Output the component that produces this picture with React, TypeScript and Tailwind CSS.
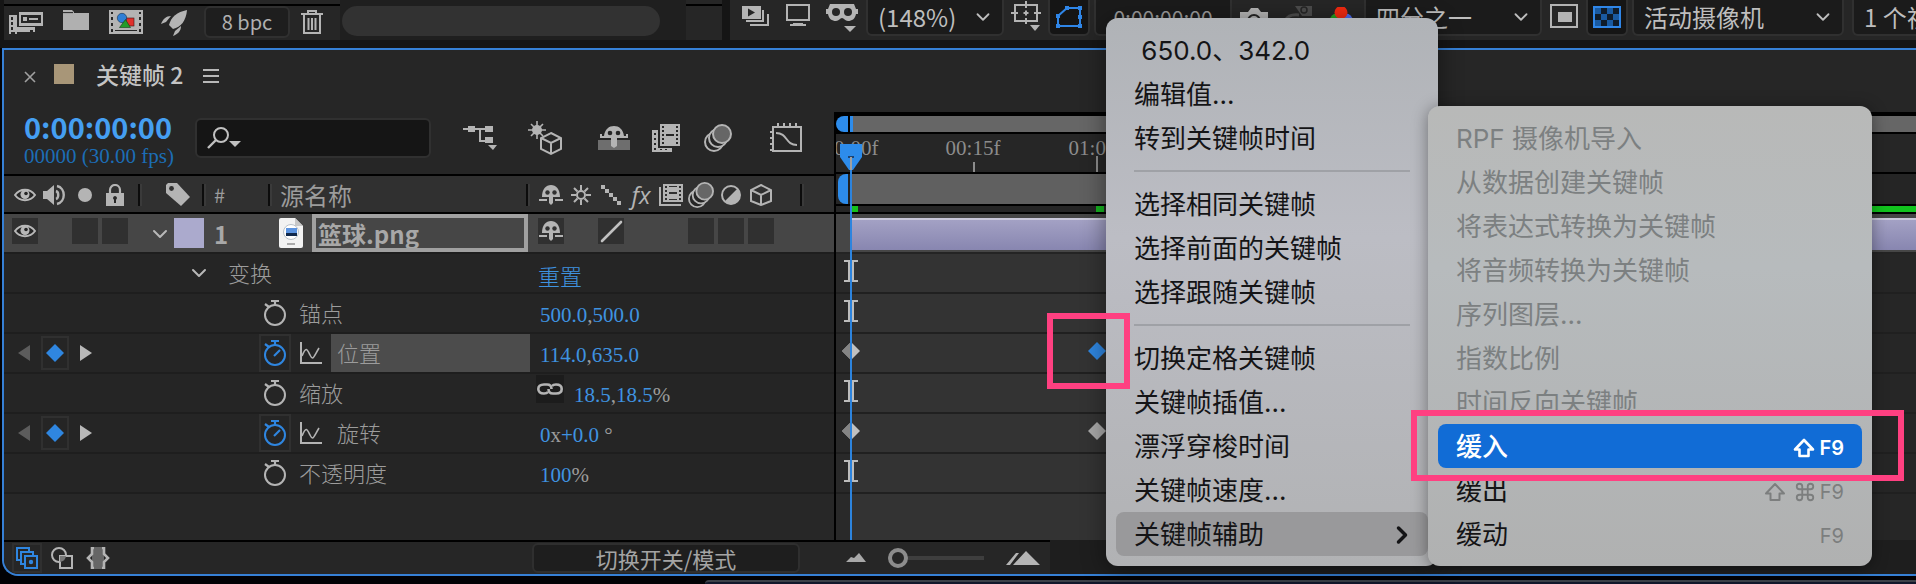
import React from "react";
import { ChevronDown, ChevronRight, Command } from "lucide-react";

type P = { children?: React.ReactNode };

const sans = "font-['Noto_Sans_CJK_SC',sans-serif]";
const serif = "font-['Liberation_Serif','Noto_Sans_CJK_SC',serif]";
const menuFont = "font-['Inter','Noto_Sans_CJK_SC',sans-serif]";

/* ---------- icons ---------- */

const Svg = ({ w, h, children }: P & { w: number; h: number }) => (
  <svg width={w} height={h} viewBox={`0 0 ${w} ${h}`} fill="none" stroke="none" aria-hidden="true" className="block shrink-0">
    {children}
  </svg>
);

const ProjectIcon = () => (
  <Svg w={34} h={24}>
    <path d="M0 5h8v12h18v5h-2v-2h-3v2H8v2H6v-2H2v2H0z" fill="#b4b4b4" />
    <path d="M2 7h2v3H2zM2 12h2v3H2zM2 17h2v3H2z" fill="#262626" />
    <rect x="10" y="2" width="24" height="14" fill="#b4b4b4" />
    <rect x="12" y="5" width="20" height="8" fill="#262626" />
    <rect x="14" y="7" width="4" height="4" fill="#b4b4b4" />
    <rect x="20" y="8" width="9" height="2" fill="#b4b4b4" />
  </Svg>
);

const FolderIcon = () => (
  <Svg w={26} h={20}>
    <path d="M0 0h9l2 2v1h15v17H0z" fill="#b0b0b0" />
    <path d="M0 2.600h10" stroke="#262626" strokeWidth="1" />
  </Svg>
);

const CompIcon = () => (
  <Svg w={34} h={24}>
    <rect width="34" height="24" fill="#b4b4b4" />
    <path d="M2 2h2v2H2zM2 7h2v3H2zM2 13h2v3H2zM2 19h2v3H2zM30 2h2v2h-2zM30 7h2v3h-2zM30 13h2v3h-2zM30 19h2v3h-2zM6 20h22v1H6z" fill="#262626" />
    <rect x="17" y="8" width="8" height="8" fill="#e0302c" stroke="#3a1a1a" strokeWidth=".6" />
    <circle cx="13" cy="8" r="4.700" fill="#2f7fd6" stroke="#16304c" strokeWidth=".6" />
    <path d="M16.500 9.500l5 8h-11z" fill="#239b2b" stroke="#123e15" strokeWidth=".6" />
  </Svg>
);

const RocketIcon = () => (
  <Svg w={26} h={26}>
    <path d="M26 0C16 2 10 7 8 15l4 4C20 17 25 11 26 0z" fill="#b4b4b4" />
    <path d="M10 6C5 6 2 9 0 14l5-2zM20 16c0 5-3 8-8 10l2-5z" fill="#b4b4b4" />
  </Svg>
);

const TrashIcon = () => (
  <Svg w={22} h={25}>
    <path d="M0 4h22M7 4V1h8v3M3 5v18h16V5M7.500 8v12M11 8v12M14.500 8v12" stroke="#b4b4b4" strokeWidth="2" />
  </Svg>
);

const StackPlayIcon = () => (
  <Svg w={28} h={22}>
    <rect width="19" height="13" y="1" fill="#b4b4b4" />
    <path d="M6 3.500l7 4-7 4z" fill="#262626" />
    <path d="M21 5v11H4M26 9v11H8" stroke="#b4b4b4" strokeWidth="2" />
  </Svg>
);

const MonitorIcon = () => (
  <Svg w={28} h={24}>
    <rect x="3" y="1" width="22" height="15" stroke="#b4b4b4" strokeWidth="2" />
    <path d="M9 19h10v1h3v2H6v-2h3z" fill="#b4b4b4" />
  </Svg>
);

const GogglesIcon = () => (
  <Svg w={32} h={28}>
    <path d="M4 0h24l2 5h2v5h-2c-1 5-4 7-8 7-3 0-4-3-6-3s-3 3-6 3c-4 0-7-2-8-7H0V5h2z" fill="#b4b4b4" />
    <circle cx="10" cy="8" r="4" fill="#262626" />
    <circle cx="22" cy="8" r="4" fill="#262626" />
    <path d="M18 22h12l-6 6z" fill="#b4b4b4" />
  </Svg>
);

const GridTargetIcon = () => (
  <Svg w={30} h={30}>
    <path d="M4 4h22v16H4zM15 0v7M15 17v6M0 12h7M23 12h7M15 9.500v5M12.500 12h5" stroke="#b4b4b4" strokeWidth="2" />
    <path d="M19 24h10l-5 6z" fill="#b4b4b4" />
  </Svg>
);

const MaskIcon = () => (
  <Svg w={28} h={24}>
    <path d="M3 21V11L12 3h13v18z" stroke="#2f86e8" strokeWidth="2" />
    <path d="M1 19h4v4H1zM1 9h4v4H1zM10 1h4v4h-4zM23 1h4v4h-4zM23 10h4v4h-4zM23 19h4v4h-4z" fill="#2f86e8" />
  </Svg>
);

const CameraIcon = () => (
  <Svg w={28} h={24}>
    <path d="M0 4h8l3-4h7l3 4h7v20H0z" fill="#b4b4b4" />
    <circle cx="14" cy="13" r="6" stroke="#262626" strokeWidth="2" />
  </Svg>
);

const SnapshotIcon = () => (
  <Svg w={28} h={28}>
    <path d="M11 0h4l2-3h5l2 3h4v10H18" fill="#4c4c4c" />
    <circle cx="20" cy="4" r="3" stroke="#262626" strokeWidth="1.500" />
    <path d="M0 18c2-8 7-10 15-9" stroke="#4c4c4c" strokeWidth="3" />
  </Svg>
);

const RgbIcon = () => (
  <Svg w={28} h={26}>
    <circle cx="8.500" cy="13" r="6.500" fill="#22a022" />
    <circle cx="18" cy="13" r="6.500" fill="#4a6cf0" />
    <circle cx="13" cy="5.500" r="6.500" fill="#f22a10" />
  </Svg>
);

const RegionIcon = () => (
  <Svg w={28} h={24}>
    <rect x="1" y="1" width="26" height="22" stroke="#b4b4b4" strokeWidth="2" />
    <rect x="8" y="8" width="14" height="10" fill="#b4b4b4" />
  </Svg>
);

const CheckerIcon = () => (
  <Svg w={28} h={24}>
    <rect x="1" y="2" width="26" height="20" fill="#0f1c2a" stroke="#2f86e8" strokeWidth="2" />
    <path d="M2 3h6v6H2zM14 3h6v6h-6zM8 9h6v6H8zM20 9h6v6h-6zM2 15h6v6H2zM14 15h6v6h-6z" fill="#1a5aa0" />
  </Svg>
);

const SearchIcon = () => (
  <Svg w={34} h={24}>
    <circle cx="14" cy="9" r="7" stroke="#c0c0c0" strokeWidth="2" />
    <path d="M9 14l-8 8" stroke="#c0c0c0" strokeWidth="2.400" />
    <path d="M22 15h12l-6 6z" fill="#c0c0c0" />
  </Svg>
);

const FlowIcon = () => (
  <Svg w={34} h={26}>
    <path d="M0 4h24M17 4v12h8" stroke="#b4b4b4" strokeWidth="2" />
    <path d="M5 1h7v6H5zM22 1h8v6h-8zM22 12h8v6h-8zM25 20h9l-4 5z" fill="#b4b4b4" />
  </Svg>
);

const Draft3dIcon = () => (
  <Svg w={36} h={36}>
    <path d="M9 1v18M0 10h18M3 4l12 12M15 4L3 16" stroke="#b4b4b4" strokeWidth="1.600" />
    <circle cx="9" cy="10" r="5" fill="#b4b4b4" />
    <path d="M23 13l10 5v11l-10 5-10-5V18z" fill="#262626" stroke="#b4b4b4" strokeWidth="2" />
    <path d="M13 18l10 5 10-5M23 23v11" stroke="#b4b4b4" strokeWidth="2" />
  </Svg>
);

const HideShyIcon = () => (
  <Svg w={32} h={26}>
    <path d="M0 15h32v10H0z" fill="#6e6e6e" />
    <path d="M2 9h2v2h2C7 4 11 1 16 1s9 3 10 10h2V9h2v4H19v8l-3 2-3-2v-8H2z" fill="#b4b4b4" />
    <circle cx="12" cy="8" r="2.300" fill="#262626" />
    <circle cx="20" cy="8" r="2.300" fill="#262626" />
  </Svg>
);

const FrameBlendIcon = () => (
  <Svg w={28} h={28}>
    <path d="M0 6h6v18h14v4H0z" fill="#b4b4b4" />
    <path d="M2 9h2v2H2zM2 14h2v2H2zM2 19h2v2H2zM2 24h2v2H2zM8 25h2v1H8zM13 25h2v1h-2z" fill="#262626" />
    <path d="M8 0h20v22H8z" fill="#b4b4b4" />
    <path d="M10 2h2v2h-2zM10 6h2v2h-2zM10 10h2v2h-2zM10 14h2v2h-2zM10 18h2v2h-2zM24 2h2v2h-2zM24 6h2v2h-2zM24 10h2v2h-2zM24 14h2v2h-2zM24 18h2v2h-2zM14 10h8v2h-8z" fill="#262626" />
  </Svg>
);

const MotionBlurIcon = ({ w = 28 }: { w?: number }) => (
  <svg width={w} height={w} viewBox="0 0 28 28" fill="none" aria-hidden="true" className="block shrink-0">
    <circle cx="10" cy="18" r="9" fill="#262626" stroke="#b4b4b4" strokeWidth="2" />
    <circle cx="14" cy="14" r="9" fill="#262626" stroke="#b4b4b4" strokeWidth="2" />
    <circle cx="18" cy="10" r="9" fill="#666" stroke="#b4b4b4" strokeWidth="2" />
  </svg>
);

const GraphEditorIcon = () => (
  <Svg w={32} h={32}>
    <path d="M3 5h28v24H3zM0 10h3M0 16h3M0 22h3M0 28h3M8 1v4M14 1v4M20 1v4M26 1v4" stroke="#b4b4b4" strokeWidth="2" />
    <path d="M6 11c12 0 9 12 21 12" stroke="#b4b4b4" strokeWidth="2" />
  </Svg>
);

const EyeIcon = () => (
  <Svg w={22} h={14}>
    <path d="M1 7c5-7 15-7 20 0-5 7-15 7-20 0z" fill="#262626" stroke="#b8b8b8" strokeWidth="2" />
    <circle cx="11" cy="6.500" r="4.500" fill="#b8b8b8" />
    <circle cx="12" cy="5.500" r="1.800" fill="#262626" />
  </Svg>
);

const SpeakerIcon = () => (
  <Svg w={24} h={22}>
    <path d="M0 7h4l7-6v20l-7-6H0z" fill="#b4b4b4" />
    <path d="M13 7c3 1 3 7 0 8M14 2c9 2 9 16 0 18" stroke="#b4b4b4" strokeWidth="2.400" />
  </Svg>
);

const DotIcon = () => (
  <Svg w={14} h={14}>
    <circle cx="7" cy="7" r="7" fill="#b4b4b4" />
  </Svg>
);

const LockIcon = () => (
  <Svg w={20} h={22}>
    <path d="M5 10V6a5 5 0 0110 0v4" stroke="#b4b4b4" strokeWidth="2.200" />
    <path d="M1 9h18v13H1z" fill="#b4b4b4" />
    <path d="M10 12a2 2 0 011 3.700V19H9v-3.300A2 2 0 0110 12z" fill="#262626" />
  </Svg>
);

const TagIcon = () => (
  <Svg w={24} h={24}>
    <path d="M0 2l2-2h9l13 14-9 9L0 10z" fill="#b4b4b4" />
    <circle cx="5.500" cy="5.500" r="2.400" fill="#303030" />
  </Svg>
);

const ShyIcon = () => (
  <Svg w={24} h={20}>
    <path d="M3 12C3 4 7 0 12 0s9 4 9 12h-7v6l-2 2-2-2v-6z" fill="#b4b4b4" />
    <circle cx="8.500" cy="7.500" r="2.200" fill="#303030" />
    <circle cx="15.500" cy="7.500" r="2.200" fill="#303030" />
    <path d="M0 15h8M16 15h8" stroke="#b4b4b4" strokeWidth="2" />
  </Svg>
);

const SunIcon = () => (
  <Svg w={20} h={20}>
    <circle cx="10" cy="10" r="4" stroke="#b4b4b4" strokeWidth="2" />
    <path d="M10 0v5M10 15v5M0 10h5M15 10h5M3 3l3.500 3.500M13.500 13.500L17 17M17 3l-3.500 3.500M6.500 13.500L3 17" stroke="#b4b4b4" strokeWidth="2" />
  </Svg>
);

const StepsIcon = () => (
  <Svg w={20} h={20}>
    <path d="M0 0h4v4H0zM4 4h4v4H4zM8 8h4v4H8zM12 12h4v4h-4zM16 16h4v4h-4z" fill="#b4b4b4" />
  </Svg>
);

const FrameSwitchIcon = () => (
  <Svg w={24} h={22}>
    <path d="M1 3v18h21" stroke="#b4b4b4" strokeWidth="2" />
    <path d="M4 0h20v18H4z" fill="#b4b4b4" />
    <path d="M6 2h2v2H6zM6 6h2v2H6zM6 10h2v2H6zM6 14h2v2H6zM20 2h2v2h-2zM20 6h2v2h-2zM20 10h2v2h-2zM20 14h2v2h-2zM10 8h8v2h-8zM10 2h8v1h-8zM10 15h8v1h-8z" fill="#303030" />
  </Svg>
);

const AdjustIcon = () => (
  <Svg w={20} h={20}>
    <circle cx="10" cy="10" r="9" stroke="#b4b4b4" strokeWidth="2" />
    <path d="M16.500 3.500A9 9 0 013.500 16.500z" fill="#b4b4b4" />
  </Svg>
);

const CubeIcon = () => (
  <Svg w={22} h={22}>
    <path d="M11 1l10 5v11l-10 4-10-4V6zM1 6l10 5 10-5M11 11v10" stroke="#b4b4b4" strokeWidth="2" />
  </Svg>
);

const FileIcon = () => (
  <Svg w={24} h={30}>
    <path d="M2 0h14l8 8v20a2 2 0 01-2 2H2a2 2 0 01-2-2V2a2 2 0 012-2z" fill="#f2f2f2" />
    <path d="M16 0l8 8h-8z" fill="#c8c8c8" />
    <circle cx="12" cy="14" r="7.500" fill="#fff" stroke="#b8c0c8" strokeWidth="1" />
    <path d="M7 10h11v5H7z" fill="#5b93e0" />
    <path d="M7 15h11v3H7z" fill="#10284c" />
    <path d="M8 26h8" stroke="#aaa" strokeWidth="2" />
  </Svg>
);

const StopwatchIcon = ({ on }: { on?: boolean }) => {
  const c = on ? "#2f86e0" : "#b4b4b4";
  return (
    <Svg w={24} h={28}>
      <circle cx="12" cy="16" r="10" stroke={c} strokeWidth="2" />
      <path d="M8 2h8M12 2v4M2 5l4 3" stroke={c} strokeWidth="2.200" />
      {on && <path d="M11 17l6-6" stroke={c} strokeWidth="2.200" />}
    </Svg>
  );
};

const GraphIcon = () => (
  <Svg w={22} h={22}>
    <path d="M1 0v21h21" stroke="#b4b4b4" strokeWidth="2" />
    <path d="M2 14c4-10 5-7 8-1s3 3 9-7" stroke="#b4b4b4" strokeWidth="1.600" />
  </Svg>
);

const LinkIcon = () => (
  <Svg w={26} h={12}>
    <path d="M11 9c-1 1.300-2 1.500-4 1.500C3 10.500 1.300 8.500 1.300 6S3 1.500 7 1.500h3c3 0 4.500 2 4.500 4.500" stroke="#b4b4b4" strokeWidth="2.600" />
    <path d="M15 3c1-1.300 2-1.500 4-1.500 4 0 5.700 2 5.700 4.500s-1.700 4.500-5.700 4.500h-3c-3 0-4.500-2-4.500-4.500" stroke="#b4b4b4" strokeWidth="2.600" />
  </Svg>
);

const Diamond = ({ kind }: { kind: "half" | "grey" | "blue" }) => (
  <Svg w={18} h={18}>
    <path d="M9 0l9 9-9 9-9-9z" fill={kind === "blue" ? "#2f86e0" : kind === "grey" ? "#a8a8a8" : "#c0c0c0"} />
    {kind === "half" && <path d="M9 0v18L0 9z" fill="#858585" />}
  </Svg>
);

const IBeam = () => (
  <Svg w={14} h={22}>
    <path d="M0 1h14M0 21h14" stroke="#bcbcbc" strokeWidth="2" />
    <path d="M7 1v20" stroke="#bcbcbc" strokeWidth="6" />
  </Svg>
);

const LayersIcon = () => (
  <Svg w={22} h={22}>
    <path d="M5 13H1V1h12v4M9 17H5V5h12v4" stroke="#2f86e0" strokeWidth="2" />
    <rect x="9" y="9" width="12" height="12" stroke="#2f86e0" strokeWidth="2" />
    <circle cx="15" cy="15" r="2.200" fill="#2f86e0" />
  </Svg>
);

const ModesIcon = () => (
  <Svg w={22} h={22}>
    <circle cx="8" cy="8" r="7" stroke="#b4b4b4" strokeWidth="2" />
    <rect x="9" y="9" width="12" height="12" fill="#262626" stroke="#b4b4b4" strokeWidth="2" />
    <path d="M9 9h6a7 7 0 01-6 6z" fill="#777" />
  </Svg>
);

const BracesIcon = () => (
  <Svg w={24} h={22}>
    <rect x="6" width="12" height="22" fill="#666" />
    <path d="M8 1H6v6l-4 4 4 4v6h2M16 1h2v6l4 4-4 4v6h-2" stroke="#b4b4b4" strokeWidth="2.600" />
  </Svg>
);

const ShiftKeyIcon = ({ bold }: { bold?: boolean }) => (
  <Svg w={22} h={20}>
    <path d="M11 2L2 11.500h4.500V18h9v-6.500H20z" stroke="currentColor" strokeWidth={bold ? 2.600 : 2} strokeLinejoin="round" />
  </Svg>
);

/* ---------- shared parts ---------- */

const IconButton = ({ label, className = "", children }: P & { label: string; className?: string }) => (
  <button type="button" aria-label={label} className={`flex shrink-0 items-center justify-center ${className}`}>
    {children}
  </button>
);

const TopSelect = ({ label, value, className }: { label: string; value: string; className: string }) => (
  <label className={`relative flex h-9 shrink-0 rounded-b-md border-2 border-t-0 border-[#303030] bg-[#1b1b1b] ${className}`}>
    <select aria-label={label} className="w-full appearance-none truncate bg-transparent pl-2.5 text-2xl leading-8 text-[#bebebe] outline-none">
      <option>{value}</option>
    </select>
    <ChevronDown size={22} strokeWidth={2} className="pointer-events-none absolute top-1.5 right-2 text-[#bebebe]" />
  </label>
);

const TopBar = () => (
  <div className="flex h-12 overflow-hidden bg-[#151515] pb-2 pl-1">
    <div className="flex w-[718px] shrink-0 bg-[#262626]">
      <div className="w-[336px] border-t-4 border-[#262626]">
        <div className="flex w-full items-start gap-4 border-t-2 border-black pt-1 pl-1">
          <IconButton label="解释素材" className="w-9"><ProjectIcon /></IconButton>
          <IconButton label="新建文件夹" className="w-8"><FolderIcon /></IconButton>
          <IconButton label="新建合成" className="w-9"><CompIcon /></IconButton>
          <IconButton label="项目设置" className="w-7"><RocketIcon /></IconButton>
          <button type="button" className="-mt-1 h-8 w-[86px] shrink-0 rounded-md border-2 border-[#303030] bg-[#1e1e1e] text-xl leading-7 text-[#b0b0b0]">
            8 bpc
          </button>
          <IconButton label="删除" className="-ml-1.5 w-6"><TrashIcon /></IconButton>
        </div>
      </div>
      <div className="flex w-[346px] items-center bg-[#1f1f1f] px-0.5">
        <div className="mt-0.5 h-[30px] w-[318px] rounded-full bg-[#323232]" />
      </div>
      <div className="flex-1 border-t-4 border-[#262626]">
        <div className="h-0.5 bg-black" />
      </div>
    </div>
    <div className="ml-2 flex min-w-0 flex-1 items-start gap-2 overflow-hidden bg-[#262626] pl-3">
      <div className="flex h-8 shrink-0 gap-3.5">
        <IconButton label="始终预览此视图"><StackPlayIcon /></IconButton>
        <IconButton label="主查看器"><MonitorIcon /></IconButton>
        <IconButton label="沉浸式视频" className="pt-1"><GogglesIcon /></IconButton>
      </div>
      <TopSelect label="放大率" value="(148%)" className="w-[138px]" />
      <IconButton label="网格和参考线" className="h-8 w-7"><GridTargetIcon /></IconButton>
      <div className="flex shrink-0 gap-1">
        <IconButton label="切换蒙版" className="h-9 w-[42px] rounded-b-md border-2 border-t-0 border-[#303030] bg-[#151515]"><MaskIcon /></IconButton>
        <button type="button" className="h-9 w-[138px] rounded-b-md border-2 border-t-0 border-[#303030] bg-[#1b1b1b] text-[21px] leading-8 text-[#9c9c9c]">
          0:00:00:00
        </button>
      </div>
      <div className="flex shrink-0 gap-4 pt-1.5">
        <IconButton label="拍摄快照"><CameraIcon /></IconButton>
        <IconButton label="显示快照"><SnapshotIcon /></IconButton>
        <IconButton label="显示通道"><RgbIcon /></IconButton>
      </div>
      <TopSelect label="分辨率" value="四分之一" className="w-[178px]" />
      <IconButton label="目标区域" className="h-8 w-7"><RegionIcon /></IconButton>
      <div className="flex shrink-0 gap-1">
        <IconButton label="切换透明网格" className="h-9 w-[42px] rounded-b-md border-2 border-t-0 border-[#303030] bg-[#151515]"><CheckerIcon /></IconButton>
        <TopSelect label="3D 视图" value="活动摄像机" className="w-[212px]" />
      </div>
      <TopSelect label="视图布局" value="1 个视图" className="w-[150px]" />
    </div>
  </div>
);

const Sep = () => <span className="h-[22px] w-1 shrink-0 border-l-2 border-[#0c0c0c] bg-[#3a3a3a]" />;
const Cell = ({ children }: P) => <span className="flex w-[30px] shrink-0 items-center justify-center">{children}</span>;
const Box = ({ children }: P) => (
  <span className="flex h-[26px] w-[26px] items-center justify-center bg-[#303030]">{children}</span>
);

const ColumnHeader = () => (
  <div className="flex h-10 items-center border-y-2 border-black bg-[#303030] pt-0.5 text-[#9c9c9c]">
    <div className="flex w-[134px] pl-1.5">
      <Cell><EyeIcon /></Cell>
      <Cell><SpeakerIcon /></Cell>
      <Cell><DotIcon /></Cell>
      <Cell><LockIcon /></Cell>
    </div>
    <Sep />
    <div className="flex w-[60px] justify-center pl-3"><TagIcon /></div>
    <Sep />
    <div className="w-[62px] pl-2 text-xl">#</div>
    <Sep />
    <div className="w-[254px] pl-2 text-2xl">源名称</div>
    <Sep />
    <div className="flex h-6 w-[270px] pl-1.5">
      <Cell><ShyIcon /></Cell>
      <Cell><SunIcon /></Cell>
      <Cell><StepsIcon /></Cell>
      <Cell><span className="font-['Open_Sans',sans-serif] text-2xl leading-6 text-[#b4b4b4] italic">fx</span></Cell>
      <Cell><FrameSwitchIcon /></Cell>
      <Cell><MotionBlurIcon w={26} /></Cell>
      <Cell><AdjustIcon /></Cell>
      <Cell><CubeIcon /></Cell>
    </div>
    <Sep />
  </div>
);

const LayerRow = () => (
  <div className="flex h-10 items-start border-b-2 border-[#1e1e1e] bg-[#464646]">
    <div className="flex w-[144px] shrink-0 pt-1 pl-1.5">
      <Cell><Box><EyeIcon /></Box></Cell>
      <Cell />
      <Cell><Box /></Cell>
      <Cell><Box /></Cell>
    </div>
    <ChevronDown size={24} className="mt-2 w-6 shrink-0 text-[#b8b8b8]" />
    <span className="mt-1 ml-0.5 h-[30px] w-[30px] shrink-0 bg-[#abaacd]" />
    <span className="w-[75px] shrink-0 pt-0.5 pl-2.5 text-2xl leading-9 font-bold text-[#a8a8a8]">1</span>
    <span className="w-[33px] shrink-0 pt-1"><FileIcon /></span>
    <input
      aria-label="图层名称"
      defaultValue="篮球.png"
      className="h-[38px] w-[216px] min-w-0 border-4 border-[#a0a0a0] bg-[#464646] pl-0.5 text-2xl leading-7 font-bold text-[#a8a8a8] outline-none"
    />
    <div className="flex pt-1 pl-2">
      <Cell><Box><ShyIcon /></Box></Cell>
      <Cell />
      <Cell>
        <Box>
          <Svg w={24} h={24}><path d="M3 22L22 3" stroke="#c0c0c0" strokeWidth="2.600" strokeLinecap="round" /></Svg>
        </Box>
      </Cell>
      <Cell />
      <Cell />
      <Cell><Box /></Cell>
      <Cell><Box /></Cell>
      <Cell><Box /></Cell>
    </div>
  </div>
);

const KeyNav = () => (
  <div className="flex items-center gap-2.5">
    <IconButton label="上一个关键帧" className="w-3.5"><Svg w={12} h={16}><path d="M12 0v16L0 8z" fill="#5c5c5c" /></Svg></IconButton>
    <IconButton label="关键帧" className="h-[34px] w-7 border-2 border-[#303030]"><Diamond kind="blue" /></IconButton>
    <IconButton label="下一个关键帧" className="w-3.5"><Svg w={12} h={16}><path d="M0 0l12 8-12 8z" fill="#b8b8b8" /></Svg></IconButton>
  </div>
);

const Val = ({ children }: P) => <button type="button" className="text-[#3f93e0]">{children}</button>;

const PropRow = ({ name, keyed, selected, children }: P & { name: string; keyed?: boolean; selected?: boolean }) => (
  <div className="flex h-10 items-center border-b-2 border-[#1e1e1e] bg-[#252525] text-[#9c9c9c]">
    <div className="flex w-[255px] shrink-0 pl-[13px]">{keyed && <KeyNav />}</div>
    <IconButton
      label={`${name} 时间变化秒表`}
      className={keyed ? "h-[38px] w-8 border-2 border-[#303030]" : "h-[38px] w-8"}
    >
      <StopwatchIcon on={keyed} />
    </IconButton>
    {keyed && <IconButton label={`${name} 图表`} className="w-9 pr-1 pl-2"><GraphIcon /></IconButton>}
    <div className={`flex h-[38px] items-center pb-0.5 text-[22px] font-light ${keyed ? "ml-1 w-[199px] pl-1.5" : "w-[239px] pl-2"} ${selected ? "bg-[#4c4c4c]" : ""}`}>
      {name}
    </div>
    <div className={`flex items-center pt-1 pl-2.5 text-[21px] leading-7 whitespace-pre ${serif}`}>{children}</div>
  </div>
);

const LeftPane = () => (
  <div className="flex w-[832px] shrink-0 flex-col border-r-2 border-black">
    <div className="flex h-[62px] items-start">
      <div className="w-[187px] pl-5 whitespace-nowrap">
        <div className="text-[29px] leading-7 font-bold text-[#459ff2]">0:00:00:00</div>
        <div className={`pt-1 text-[21px] leading-6 text-[#1c6db5] ${serif}`}>00000 (30.00 fps)</div>
      </div>
      <label className="mt-1.5 ml-1 flex h-10 w-[236px] items-center rounded-md border-2 border-[#303030] bg-[#151515] pl-2.5">
        <SearchIcon />
        <input aria-label="搜索" className="min-w-0 flex-1 bg-transparent text-xl text-[#c0c0c0] outline-none" />
      </label>
      <div className="flex h-[52px] flex-1 items-center pl-[31px]">
        <IconButton label="合成微型流程图" className="w-9"><FlowIcon /></IconButton>
        <IconButton label="草图 3D" className="ml-[30px] w-9"><Draft3dIcon /></IconButton>
        <IconButton label="隐藏消隐图层" className="ml-8 w-9"><HideShyIcon /></IconButton>
        <IconButton label="帧混合" className="ml-5 w-7"><FrameBlendIcon /></IconButton>
        <IconButton label="运动模糊" className="ml-6 w-7"><MotionBlurIcon /></IconButton>
        <IconButton label="图表编辑器" className="ml-9 w-9"><GraphEditorIcon /></IconButton>
      </div>
    </div>
    <ColumnHeader />
    <LayerRow />
    <div className="flex h-10 items-center border-b-2 border-[#1e1e1e] bg-[#252525] text-[22px] font-light text-[#9c9c9c]">
      <ChevronDown size={24} className="ml-[183px] text-[#b8b8b8]" />
      <span className="w-[309px] pb-0.5 pl-[17px]">变换</span>
      <button type="button" className="pt-1 pl-[18px] font-light text-[#3f93e0]">重置</button>
    </div>
    <PropRow name="锚点"><Val>500.0</Val>,<Val>500.0</Val></PropRow>
    <PropRow name="位置" keyed selected><Val>114.0</Val>,<Val>635.0</Val></PropRow>
    <PropRow name="缩放">
      <span className="-mt-3 -ml-1 mr-2.5 flex h-7 w-7 items-center justify-center bg-[#1c1c1c]"><LinkIcon /></span>
      <Val>18.5</Val>,<Val>18.5</Val>%
    </PropRow>
    <PropRow name="旋转" keyed><Val>0</Val>x<Val>+0.0</Val> °</PropRow>
    <PropRow name="不透明度"><Val>100</Val>%</PropRow>
    <div className="h-[46px] flex-1 bg-[#272727]" />
  </div>
);

const TrackRow = ({ children }: P) => (
  <div className="relative flex h-10 border-b-2 border-[#202020]">
    <div className="w-3.5 bg-[#292929]" />
    <div className="flex-1 bg-[#333333]" />
    <div className="w-20 bg-[#262626]" />
    {children}
  </div>
);

const Mark = ({ children, at = "left-[15px]" }: P & { at?: string }) => (
  <span className={`absolute top-[17px] -translate-x-1/2 -translate-y-1/2 ${at}`}>{children}</span>
);

const Timeline = () => (
  <div className="relative flex min-w-0 flex-1 flex-col overflow-hidden">
    <div className="flex h-[22px] border-t-4 border-b-2 border-black bg-black">
      <span className="w-3 rounded-l-xl bg-[#2d8ceb]" />
      <span className="ml-0.5 w-[3px] bg-[#2d8ceb]" />
      <span className="flex-1 bg-[#666666]" />
    </div>
    <div className={`relative h-[38px] bg-[#262626] text-[21px] leading-6 text-[#8c8c8c] ${serif}`}>
      <span className="absolute top-0.5 left-[15px] -translate-x-1/2">00:00f</span>
      <span className="absolute top-0.5 left-[137px] -translate-x-1/2">00:15f</span>
      <span className="absolute top-0.5 left-[260px] -translate-x-1/2">01:00f</span>
      <span className="absolute bottom-0 left-[137px] h-2.5 w-0.5 bg-[#8c8c8c]" />
      <span className="absolute bottom-0 left-[260px] h-4 w-0.5 bg-[#8c8c8c]" />
    </div>
    <div className="flex h-[34px] border-y-2 border-black bg-[#252525]">
      <span className="ml-0.5 w-2.5 rounded-l-lg bg-[#2d8ceb]" />
      <span className="w-0.5 bg-[#222222]" />
      <div className="mr-20 flex-1 bg-[#606060]" />
    </div>
    <div className="flex h-2 border-b-2 border-black bg-[#262626]">
      <span className="ml-4 w-1.5 bg-[#16c21c]" />
      <span className="ml-[238px] w-2 bg-[#16b420]" />
      <span className="ml-auto w-20 bg-[#12c41e]" />
    </div>
    <div className="h-10 border-b-2 border-[#242424] bg-[#464646] pt-1 pb-0.5 pl-4">
      <div className="h-8 border-t-2 border-[#c9c8da] bg-linear-to-b from-[#a3a1c4] to-[#8886b0]" />
    </div>
    <TrackRow><Mark><IBeam /></Mark></TrackRow>
    <TrackRow><Mark><IBeam /></Mark></TrackRow>
    <TrackRow><Mark><Diamond kind="half" /></Mark><Mark at="left-[261px]"><Diamond kind="blue" /></Mark></TrackRow>
    <TrackRow><Mark><IBeam /></Mark></TrackRow>
    <TrackRow><Mark><Diamond kind="half" /></Mark><Mark at="left-[261px]"><Diamond kind="grey" /></Mark></TrackRow>
    <TrackRow><Mark><IBeam /></Mark></TrackRow>
    <div className="flex h-[46px]">
      <div className="w-3.5 bg-[#292929]" />
      <div className="flex-1 bg-[#333333]" />
      <div className="w-20 bg-[#262626]" />
    </div>
    <div className="absolute top-8 bottom-0 left-[15px] flex -translate-x-1/2 flex-col items-center">
      <Svg w={22} h={26}>
        <path d="M0 0h22v13L13 26H9L0 13z" fill="#2d8ceb" />
        <path d="M8 13h6" stroke="#1c4474" strokeWidth="2" />
        <path d="M11 13v13" stroke="#a0a0a0" strokeWidth="2" />
      </Svg>
      <span className="w-0.5 flex-1 bg-[#2d84de]" />
    </div>
  </div>
);

const Footer = () => (
  <div className="flex h-[34px] bg-[#1e1e1e]">
    <div className="flex w-[1046px] shrink-0 items-center border-t-2 border-black bg-[#262626]">
      <IconButton label="图层开关窗格" className="ml-2 h-[30px] w-[30px] border-2 border-[#303030]"><LayersIcon /></IconButton>
      <IconButton label="转换控制窗格" className="ml-1 w-8"><ModesIcon /></IconButton>
      <IconButton label="入点出点窗格" className="ml-1.5 w-7"><BracesIcon /></IconButton>
      <button type="button" className="ml-[420px] h-[30px] w-[268px] rounded-md border-2 border-[#2f2f2f] bg-[#1e1e1e] text-[22px] leading-6 text-[#a4a4a4]">
        切换开关/模式
      </button>
      <IconButton label="缩小" className="ml-[46px] w-5"><Svg w={20} h={10}><path d="M0 9l5-5 3 1 5-5 7 9z" fill="#a8a8a8" /></Svg></IconButton>
      <input
        type="range"
        aria-label="时间缩放"
        defaultValue={0}
        className="ml-[22px] h-5 w-24 appearance-none bg-transparent [&::-webkit-slider-runnable-track]:h-1 [&::-webkit-slider-runnable-track]:bg-[#3e3e3e] [&::-webkit-slider-thumb]:-mt-2 [&::-webkit-slider-thumb]:h-5 [&::-webkit-slider-thumb]:w-5 [&::-webkit-slider-thumb]:appearance-none [&::-webkit-slider-thumb]:rounded-full [&::-webkit-slider-thumb]:border-4 [&::-webkit-slider-thumb]:border-[#8c8c8c] [&::-webkit-slider-thumb]:bg-[#262626]"
      />
      <IconButton label="放大" className="ml-[21px] w-9"><Svg w={34} h={14}><path d="M0 14L10 2h3L4 14zM7 14L20 0l14 14z" fill="#b4b4b4" /></Svg></IconButton>
    </div>
  </div>
);

/* ---------- menus ---------- */

const MenuItem = ({ text, state = "normal", keys, arrow }: { text: string; state?: "normal" | "open" | "off" | "on"; keys?: React.ReactNode; arrow?: boolean }) => {
  const look = {
    normal: "text-[#141416]",
    open: "bg-[#99999b] text-[#141416]",
    off: "text-[#7c8081]",
    on: "bg-[#116cd6] font-medium text-white",
  }[state];
  return (
    <button type="button" role="menuitem" disabled={state === "off"} className={`flex h-11 w-full shrink-0 items-center rounded-lg px-[18px] pt-0.5 text-[26px] leading-none whitespace-pre ${look}`}>
      {text}
      {keys && <span className={`ml-auto flex items-center gap-1 pt-0.5 text-xl leading-none ${state === "on" ? "font-semibold" : "text-[#7c7e7e]"}`}>{keys}</span>}
      {arrow && <ChevronRight size={28} strokeWidth={3} className="-mr-1.5 ml-auto" />}
    </button>
  );
};

const Rule = () => (
  <div role="separator" className="flex h-[22px] items-center px-[18px]">
    <span className="h-0.5 w-full bg-[#9fa1a6]" />
  </div>
);

const ContextMenu = () => (
  <div role="menu" aria-label="关键帧" className={`absolute top-[18px] left-[1106px] w-[332px] rounded-xl bg-linear-to-b from-[#b0b3b7] via-[#bcbdc4] via-40% to-[#b1b2b4] px-2.5 py-2.5 shadow-[0_4px_24px_rgba(0,0,0,0.45)] ${menuFont}`}>
    <MenuItem text=" 650.0、342.0" />
    <MenuItem text="编辑值..." />
    <MenuItem text="转到关键帧时间" />
    <Rule />
    <MenuItem text="选择相同关键帧" />
    <MenuItem text="选择前面的关键帧" />
    <MenuItem text="选择跟随关键帧" />
    <Rule />
    <MenuItem text="切换定格关键帧" />
    <MenuItem text="关键帧插值..." />
    <MenuItem text="漂浮穿梭时间" />
    <MenuItem text="关键帧速度..." />
    <MenuItem text="关键帧辅助" state="open" arrow />
  </div>
);

const SubMenu = () => (
  <div role="menu" aria-label="关键帧辅助" className={`absolute top-[106px] left-[1428px] w-[444px] rounded-xl bg-linear-to-b from-[#b8b9b8] via-[#b7bbbd] via-35% to-[#b0b1b1] px-2.5 py-2.5 shadow-[0_2px_16px_rgba(0,0,0,0.4)] ${menuFont}`}>
    <MenuItem text="RPF 摄像机导入" state="off" />
    <MenuItem text="从数据创建关键帧" state="off" />
    <MenuItem text="将表达式转换为关键帧" state="off" />
    <MenuItem text="将音频转换为关键帧" state="off" />
    <MenuItem text="序列图层..." state="off" />
    <MenuItem text="指数比例" state="off" />
    <MenuItem text="时间反向关键帧" state="off" />
    <MenuItem text="缓入" state="on" keys={<><ShiftKeyIcon bold />F9</>} />
    <MenuItem text="缓出" keys={<><ShiftKeyIcon /><Command size={22} className="ml-1" />F9</>} />
    <MenuItem text="缓动" keys="F9" />
  </div>
);

export default function App() {
  return (
    <main className={`relative overflow-hidden bg-[#020205] ${sans}`}>
      <TopBar />
      <section className="ml-0.5 rounded-bl-2xl border-2 border-r-0 border-[#3680d6] bg-[#262626]">
        <div className="overflow-hidden rounded-bl-2xl">
          <header className="flex h-[62px] items-start pt-1.5 pl-5 text-[#c4c4c4]">
            <IconButton label="关闭" className="mt-[15px] h-3 w-3">
              <Svg w={12} h={12}><path d="M1 1l10 10M11 1L1 11" stroke="#a0a0a0" strokeWidth="1.600" /></Svg>
            </IconButton>
            <span className="mt-2 ml-[18px] h-5 w-5 bg-[#a89678]" />
            <h1 className="ml-[22px] text-[23px] leading-9 font-medium">关键帧 2</h1>
            <IconButton label="面板菜单" className="mt-3 ml-5">
              <Svg w={16} h={16}><path d="M0 2h16M0 8h16M0 14h16" stroke="#b8b8b8" strokeWidth="2" /></Svg>
            </IconButton>
          </header>
          <div className="flex">
            <LeftPane />
            <Timeline />
          </div>
          <Footer />
        </div>
      </section>
      <div className="h-2 pt-1">
        <div className="ml-[705px] h-1 rounded-tl-full border-t-2 border-[#3c4048] bg-[#12172b]" />
      </div>
      <ContextMenu />
      <SubMenu />
      <div className="pointer-events-none absolute top-[313px] left-[1047px] h-[76px] w-[83px] border-6 border-[#ff4081]" />
      <div className="pointer-events-none absolute top-[410px] left-[1411px] h-[71px] w-[493px] border-6 border-[#ff4081]" />
    </main>
  );
}
